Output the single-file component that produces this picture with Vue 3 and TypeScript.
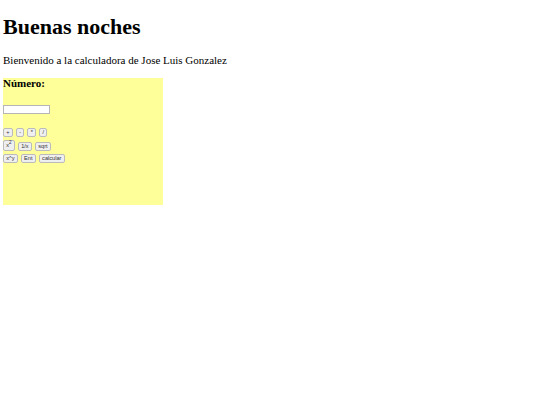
<script setup lang="ts">
const rows: string[][] = [
  ['+', '-', '*', '/'],
  ['x2', '1/x', 'sqrt'],
  ['x^y', 'Ent', 'calcular'],
]
</script>

<template>
  <main class="page">
    <h1 class="title">Buenas noches</h1>
    <p class="welcome">Bienvenido a la calculadora de Jose Luis Gonzalez</p>
    <form class="calc" @submit.prevent>
      <h3 class="label">Número:</h3>
      <input class="field" type="text" />
      <div class="keys">
        <div v-for="(row, i) in rows" :key="i" class="row">
          <button v-for="k in row" :key="k" type="button" class="key" :class="{ tall: k === 'x2' }">
            <template v-if="k === 'x2'">x<sup>2</sup></template>
            <template v-else>{{ k }}</template>
          </button>
        </div>
      </div>
    </form>
  </main>
</template>

<style scoped>
.page {
  padding: 0 3px;
  font-family: "Liberation Serif", serif;
  color: #000;
}
.title {
  margin: 0;
  padding-top: 13px;
  font-size: 22px;
  line-height: 27px;
  font-weight: 700;
}
.welcome {
  margin: 13px 0 0;
  font-size: 11px;
  line-height: 14px;
}
.calc {
  margin-top: 11px;
  width: 160px;
  height: 127px;
  background: #ffff99;
  box-sizing: border-box;
}
.label {
  margin: 0;
  font-size: 11px;
  line-height: 11px;
  font-weight: 700;
}
.field {
  display: block;
  margin-top: 16px;
  width: 47px;
  height: 9px;
  box-sizing: border-box;
  border: 1px solid #b5b5b5;
  background: #fff;
  padding: 0;
}
.keys {
  margin-top: 14px;
  display: flex;
  flex-direction: column;
  gap: 3px;
}
.row {
  display: flex;
  align-items: flex-end;
  gap: 3px;
}
.key {
  height: 9px;
  padding: 0 2.3px;
  font-family: "Liberation Sans", sans-serif;
  font-size: 5.6px;
  line-height: 7px;
  color: #333;
  background: #efefef;
  border: 1px solid #bbb;
  border-radius: 2px;
  box-sizing: border-box;
}
.tall {
  height: 11px;
}
.key sup {
  font-size: 4.5px;
  line-height: 0;
}
</style>
